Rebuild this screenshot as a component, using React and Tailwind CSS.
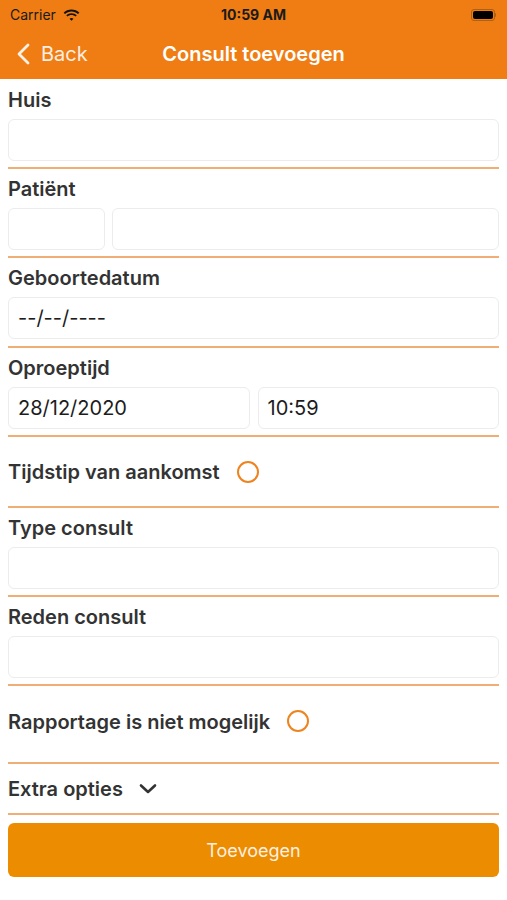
import React from "react";

const font = { fontFamily: "Inter, 'Noto Sans', 'Liberation Sans', sans-serif" };

function Divider() {
  return <div className="h-[2px] bg-[#efae76]" />;
}

function Label({ children }) {
  return (
    <div className="h-[39px] flex items-center text-[20px] font-semibold text-[#333333] leading-[24px]">
      {children}
    </div>
  );
}

function Input({ value, className = "" }) {
  return (
    <div
      className={
        "h-[42px] rounded-[6px] border border-[#ececec] bg-white flex items-center px-[9px] text-[20px] text-[#1c1c1c] " +
        className
      }
    >
      {value}
    </div>
  );
}

function Radio() {
  return <div className="w-[22px] h-[22px] rounded-full border-[2.5px] border-[#ee8420]" />;
}

export default function App() {
  return (
    <div className="w-[507px] h-[900px] bg-white overflow-hidden" style={font}>
      <div className="bg-[#ef7d14] h-[79px] flex flex-col">
        <div className="h-[29px] relative flex items-center px-[10px] text-[14px] text-[#1a1a1a]">
          <div className="flex items-center gap-[6px]">
            <span>Carrier</span>
            <svg width="19" height="14" viewBox="0 0 17 13">
              <path d="M8.5 3.2c2.3 0 4.4.9 6 2.4l1.3-1.3C13.9 2.5 11.3 1.4 8.5 1.4S3.1 2.5 1.2 4.3l1.3 1.3c1.6-1.5 3.7-2.4 6-2.4z" fill="#111" />
              <path d="M8.5 6.6c1.4 0 2.7.5 3.6 1.4l1.3-1.3C12.1 5.5 10.4 4.8 8.5 4.8S4.9 5.5 3.6 6.7l1.3 1.3c.9-.9 2.2-1.4 3.6-1.4z" fill="#111" />
              <path d="M8.5 9.2c.7 0 1.3.3 1.8.7L8.5 11.8 6.7 9.9c.5-.4 1.1-.7 1.8-.7z" fill="#111" />
            </svg>
          </div>
          <div className="absolute left-0 right-0 text-center font-bold text-[14px] pointer-events-none">10:59 AM</div>
          <div className="ml-auto mr-[1px] flex items-center">
            <div className="w-[24px] h-[12px] rounded-[3px] border border-[#b06010] p-[1px]">
              <div className="w-full h-full rounded-[2px] bg-black" />
            </div>
            <div className="w-[1.5px] h-[4px] bg-[#b06010] rounded-r" />
          </div>
        </div>
        <div className="flex-1 relative flex items-center">
          <div className="flex items-center pl-[16px] text-[20px]">
            <svg width="14" height="22" viewBox="0 0 14 22" className="mr-[11px]">
              <path d="M12 2 L3 11 L12 20" stroke="#fdf0e4" strokeWidth="2.8" fill="none" strokeLinecap="round" strokeLinejoin="round" />
            </svg>
            <span className="text-[#fbeee2]">Back</span>
          </div>
          <div className="absolute left-0 right-0 text-center text-white font-semibold text-[20px] pointer-events-none">
            Consult toevoegen
          </div>
        </div>
      </div>

      <div className="px-[8px] flex flex-col">
        <div className="pt-[1px]">
          <Label>Huis</Label>
          <Input />
          <div className="h-[6px]" />
          <Divider />
        </div>
        <div>
          <Label>Patiënt</Label>
          <div className="flex gap-[7px]">
            <Input className="w-[97px]" />
            <Input className="flex-1" />
          </div>
          <div className="h-[6px]" />
          <Divider />
        </div>
        <div>
          <Label>Geboortedatum</Label>
          <Input value="--/--/----" />
          <div className="h-[7px]" />
          <Divider />
        </div>
        <div>
          <Label>Oproeptijd</Label>
          <div className="flex gap-[8px]">
            <Input className="flex-1" value="28/12/2020" />
            <Input className="flex-1" value="10:59" />
          </div>
          <div className="h-[6px]" />
          <Divider />
        </div>
        <div className="h-[69px] flex items-center">
          <div className="text-[20px] font-semibold text-[#333333] leading-[24px] mr-[17px]">Tijdstip van aankomst</div>
          <Radio />
        </div>
        <Divider />
        <div>
          <Label>Type consult</Label>
          <Input />
          <div className="h-[6px]" />
          <Divider />
        </div>
        <div>
          <Label>Reden consult</Label>
          <Input />
          <div className="h-[6px]" />
          <Divider />
        </div>
        <div className="h-[76px] flex items-start pt-[24px]">
          <div className="text-[20px] font-semibold text-[#333333] leading-[24px] mr-[17px]">Rapportage is niet mogelijk</div>
          <Radio />
        </div>
        <Divider />
        <div className="h-[49px] flex items-center">
          <div className="text-[20px] font-semibold text-[#333333] leading-[24px] mr-[16px]">Extra opties</div>
          <svg width="18" height="12" viewBox="0 0 18 12">
            <path d="M2 2.5 L9 9 L16 2.5" stroke="#333" strokeWidth="2.6" fill="none" strokeLinecap="round" strokeLinejoin="round" />
          </svg>
        </div>
        <Divider />
        <div className="h-[8px]" />
        <div className="h-[54px] rounded-[6px] bg-[#ec8c00] flex items-center justify-center text-[#fdf0e0] text-[18px]">
          Toevoegen
        </div>
      </div>
    </div>
  );
}
